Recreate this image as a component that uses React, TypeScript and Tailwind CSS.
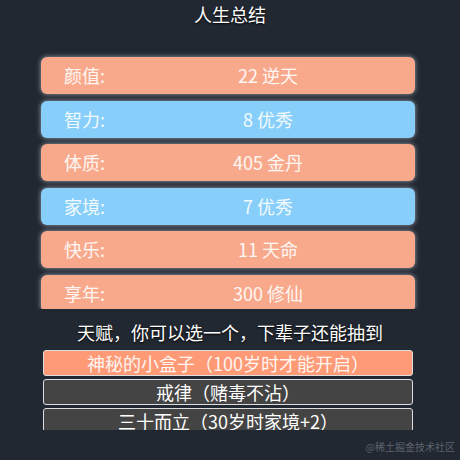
const STATS = [
  { label: '颜值:', value: '22 逆天', color: 'bg-[#f8a98b]' },
  { label: '智力:', value: '8 优秀', color: 'bg-[#87cefa]' },
  { label: '体质:', value: '405 金丹', color: 'bg-[#f8a98b]' },
  { label: '家境:', value: '7 优秀', color: 'bg-[#87cefa]' },
  { label: '快乐:', value: '11 天命', color: 'bg-[#f8a98b]' },
  { label: '享年:', value: '300 修仙', color: 'bg-[#f8a98b]' },
];

const TALENTS = [
  { name: '神秘的小盒子（100岁时才能开启）', active: true },
  { name: '戒律（赌毒不沾）', active: false },
  { name: '三十而立（30岁时家境+2）', active: false },
];

export default function App() {
  return (
    <div
      className="relative flex flex-col h-[460px] w-[460px] overflow-hidden bg-[#222831] text-white"
      style={{ fontFamily: '"Noto Sans CJK SC", "Noto Sans", sans-serif' }}
    >
      <h1 className="h-7 text-center text-[18px] leading-7 [text-shadow:0_1px_2px_#000]">人生总结</h1>

      <div className="mt-[22px] h-[259px] overflow-hidden pt-[7px]">
        <div className="flex flex-col gap-[6.5px] ml-[41px] w-[374px]">
          {STATS.map((s) => (
            <div
              key={s.label}
              className={`flex items-center h-[37px] shrink-0 rounded-md pl-[23px] pr-[23px] text-[18px] text-white/90 shadow-[0_0_5px_#9ca3af] ${s.color}`}
            >
              <span className="w-[80px]">{s.label}</span>
              <span className="flex-1 text-center">{s.value}</span>
            </div>
          ))}
        </div>
      </div>

      <p className="mt-[9px] text-center text-[18px] leading-7 [text-shadow:0_1px_2px_#000]">
        天赋，你可以选一个，下辈子还能抽到
      </p>

      <div className="mt-[4px] h-[80px] overflow-hidden">
        <div className="flex flex-col gap-[3px] ml-[43px] w-[370px]">
          {TALENTS.map((t) => (
            <div
              key={t.name}
              className={`h-[26px] shrink-0 rounded-[3px] border border-[#dddddd] text-center text-[18px] leading-[24px] ${
                t.active ? 'bg-[#ff9a76] text-white/90' : 'bg-[#444444] text-white'
              }`}
            >
              {t.name}
            </div>
          ))}
        </div>
      </div>

      <span className="absolute right-[5px] bottom-[6px] text-[10px] text-[#5c6370]">@稀土掘金技术社区</span>
    </div>
  );
}
